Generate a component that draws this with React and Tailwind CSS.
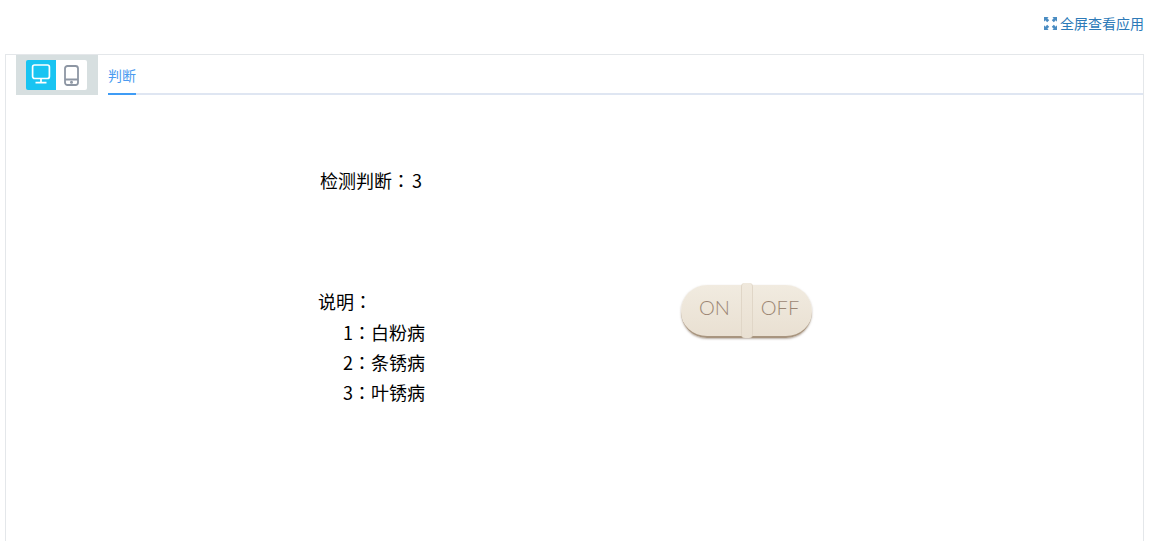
const Colon = () => <span className="font-['Noto_Sans_CJK_TC',sans-serif]">：</span>;

export default function App() {
  return (
    <div className="w-[1172px] h-[541px] overflow-hidden bg-white font-['Noto_Sans_CJK_SC',sans-serif] text-black">
      <header className="h-[54px] flex items-start justify-end pr-[28px] pt-[13px]">
        <div className="flex items-center gap-[3px] h-[20px] text-[14px] leading-[20px] text-[#2d7ab8]">
          <svg width="13" height="13" viewBox="0 0 14 14" fill="#4a8cc2">
            <path d="M0 0h5L3.6 1.4 5.6 3.4 3.4 5.6 1.4 3.6 0 5z" />
            <path d="M14 0v5l-1.4-1.4-2 2-2.2-2.2 2-2L9 0z" />
            <path d="M0 14V9l1.4 1.4 2-2 2.2 2.2-2 2L5 14z" />
            <path d="M14 14H9l1.4-1.4-2-2 2.2-2.2 2 2L14 9z" />
          </svg>
          <span>全屏查看应用</span>
        </div>
      </header>
      <main className="ml-[5px] w-[1139px] h-[487px] border border-[#e4e7ea] border-b-0">
        <nav className="h-[40px] flex">
          <div className="ml-[10px] w-[82px] h-[40px] bg-[#d7dfe0] flex items-start pl-[10px] pt-[5px]">
            <div className="w-[30px] h-[30px] bg-[#19c4f2] rounded-l-[2px] flex items-center justify-center">
              <svg width="20" height="20" viewBox="0 0 20 20" fill="none" stroke="#fff" strokeWidth="1.7" className="-translate-y-[1px]">
                <rect x="1.6" y="1" width="16.8" height="13.5" rx="2" />
                <path d="M10 14.5v4M4.5 18.6h11" />
              </svg>
            </div>
            <div className="w-[31px] h-[30px] bg-white rounded-r-[2px] flex items-center justify-center">
              <svg width="16" height="21" viewBox="0 0 16 21" fill="none" stroke="#8d96a3" strokeWidth="1.8" className="-translate-x-[0.5px]">
                <rect x="1.5" y="1" width="13" height="19" rx="2.5" />
                <path d="M1.5 14.5h13" />
                <circle cx="8" cy="17.2" r="0.6" fill="#8d96a3" />
              </svg>
            </div>
          </div>
          <div className="ml-[10px] flex-1 h-[40px] border-b-2 border-[#dfe6f2]">
            <div className="w-[28px] h-[40px] border-b-2 border-[#3f9cf5] text-[14px] leading-[41px] text-[#4a9bf0]">判断</div>
          </div>
        </nav>
        <section className="flex items-start">
          <div className="ml-[312px] w-[150px] pt-[73px] text-[18px] leading-[24px]">
            <p className="pl-[2px]">检测判断<Colon /><span className="ml-[2px]">3</span></p>
            <p className="mt-[97px]">说明<Colon /></p>
            <div className="mt-[4px] pl-[25px] leading-[30px]">
              <p>1<Colon />白粉病</p>
              <p>2<Colon />条锈病</p>
              <p>3<Colon />叶锈病</p>
            </div>
          </div>
          <div className="ml-[213px] mt-[190px] relative w-[131px] h-[53px] rounded-[26px] bg-gradient-to-b from-[#f1ebe0] to-[#e9e0d2] border-b-2 border-[#a8957f] shadow-[0_1px_2px_rgba(120,100,80,0.5)] flex items-start text-[20px] leading-[44px] font-light text-[#9c8673] font-['Lato',sans-serif]">
            <span className="w-[68px] text-center">ON</span>
            <span className="w-[65px] text-center">OFF</span>
            <div className="absolute left-[60px] top-[-2px] w-[12px] h-[55px] rounded-[4px] bg-gradient-to-b from-[#f0e9dd] to-[#e9e0d2] border-x border-[#e0d6c7]" />
          </div>
        </section>
      </main>
    </div>
  );
}
